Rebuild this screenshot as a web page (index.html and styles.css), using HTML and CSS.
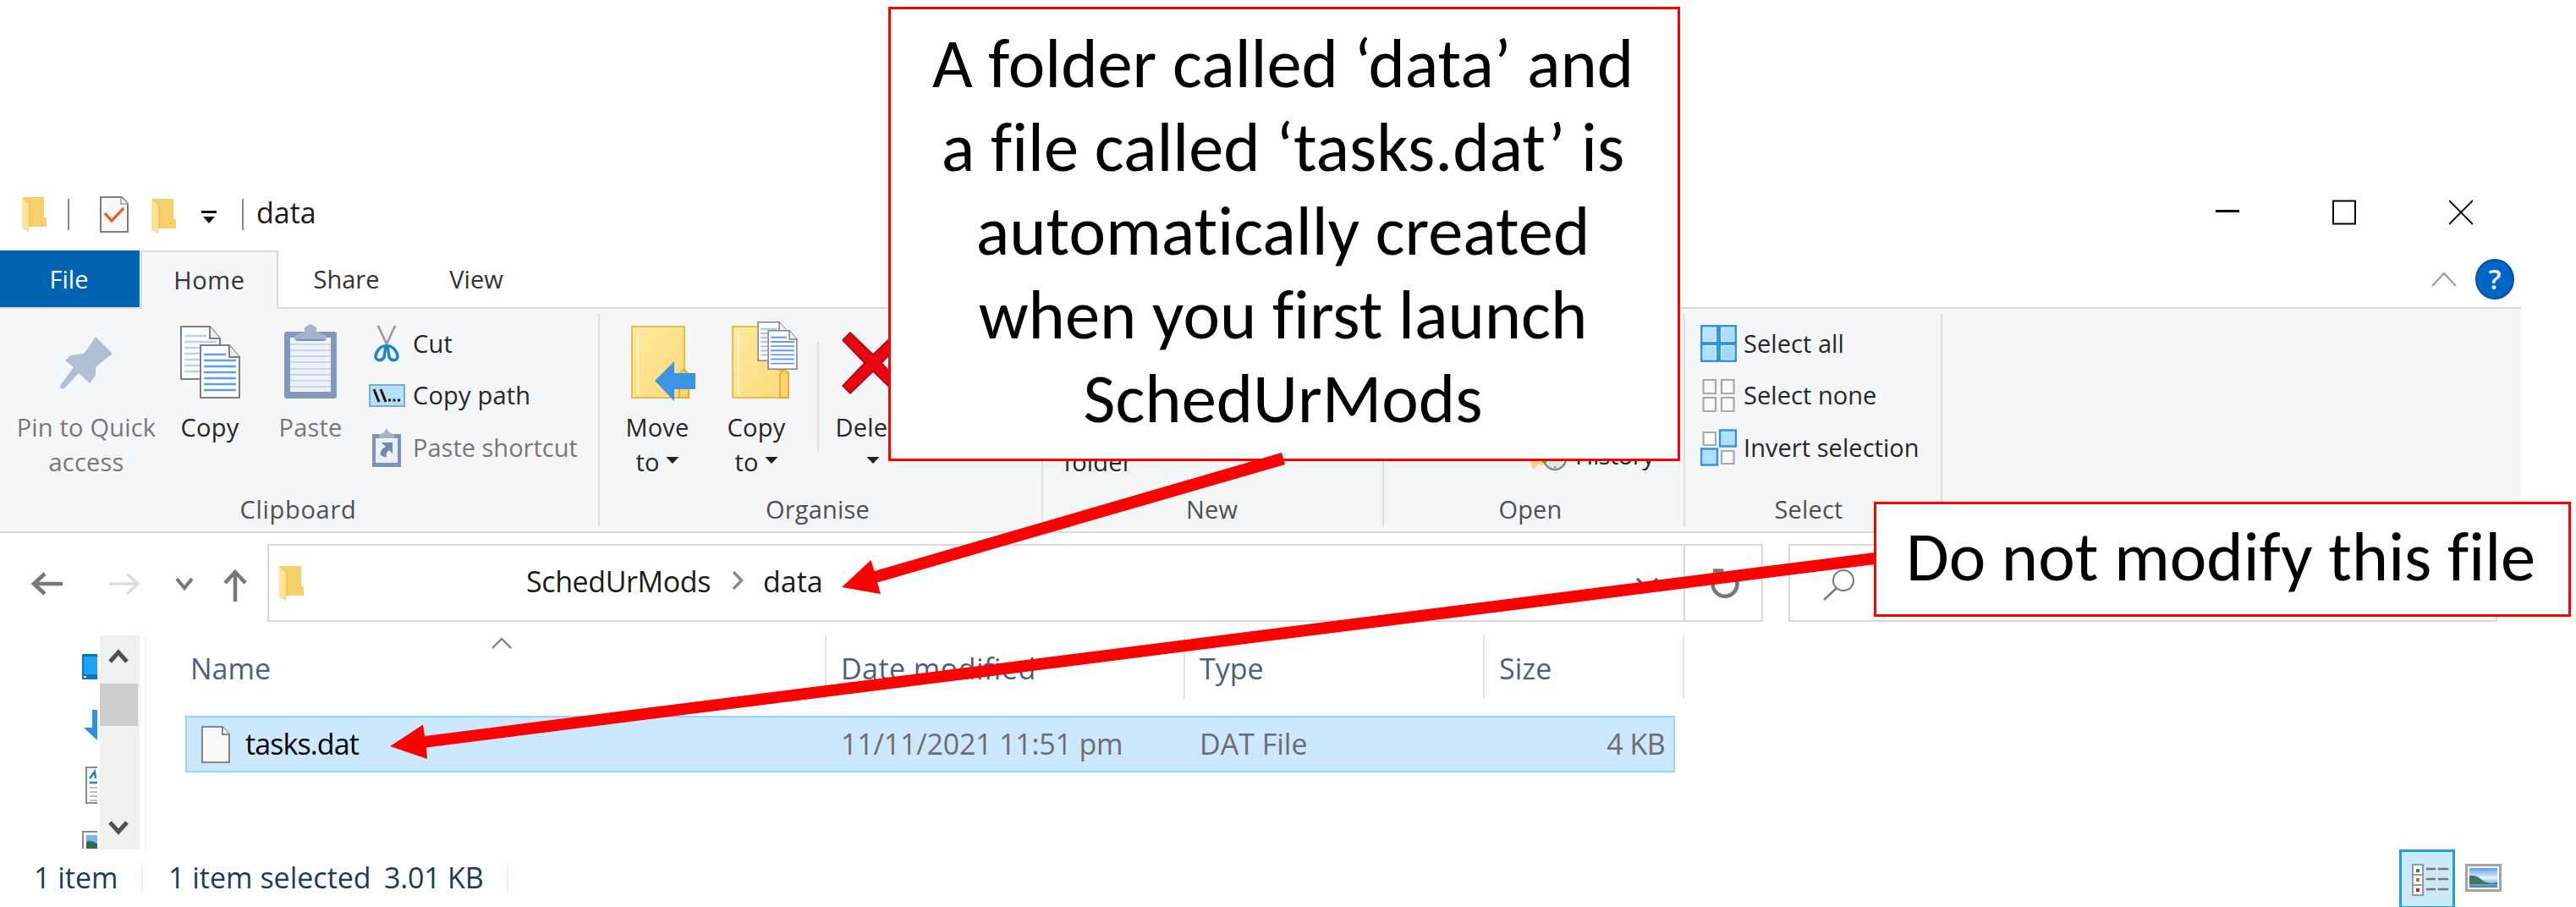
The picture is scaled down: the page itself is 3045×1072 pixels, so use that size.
FILE: index.html
```html
<!DOCTYPE html>
<html lang="en">
<head>
<meta charset="utf-8">
<title>data</title>
<link rel="stylesheet" href="styles.css">
</head>
<body>
<svg class="defs" width="0" height="0">
  <defs>
    <linearGradient id="gold" x1="0" y1="0" x2="1" y2="1"><stop offset="0" stop-color="#ffeaa0"/><stop offset="1" stop-color="#fbd876"/></linearGradient>
    <linearGradient id="sky" x1="0" y1="0" x2="0" y2="1"><stop offset="0" stop-color="#5b9bff"/><stop offset=".5" stop-color="#e8f4ff"/><stop offset="1" stop-color="#3f7fb8"/></linearGradient>
    <linearGradient id="tile" x1="0" y1="0" x2="1" y2="1"><stop offset="0" stop-color="#c4e6ff"/><stop offset="1" stop-color="#9dd3fb"/></linearGradient>
    <symbol id="folder" viewBox="0 0 29 42">
      <path d="M1 1H26V24L29 26V36H8V42L0 37Z" fill="#f5cf69"/>
      <path d="M8 9V36L6 41L0 38V1Z" fill="#ffe394"/>
      <path d="M1 1L9 9V36" fill="none" stroke="#e9bf58" stroke-width="1"/>
    </symbol>
    <symbol id="sheet" viewBox="0 0 48 64">
      <path d="M1 1H35L47 15V63H1Z" fill="#fff" stroke="#808080" stroke-width="2"/>
      <path d="M35 1V15H47" fill="#eee" stroke="#808080" stroke-width="2"/>
      <path d="M5 12H31M5 19H43M5 26H43M5 33H43M5 40H43M5 47H43M5 54H43" stroke="currentColor" stroke-width="2.6"/>
    </symbol>
  </defs>
</svg>

<div class="window">
  <header class="titlebar">
    <svg class="folder f-app"><use href="#folder"/></svg>
    <i class="bar"></i>
    <svg class="check" viewBox="0 0 34 43"><path d="M1 1H26L33 9V42H1Z" fill="#f8f8f8" stroke="#7c7c7c" stroke-width="2"/><path d="M25 1V9H33" fill="#fff" stroke="#9a9a9a" stroke-width="1.6"/><path d="M6 20L14 29L28 14" fill="none" stroke="#f4510b" stroke-width="3"/></svg>
    <svg class="folder f-new"><use href="#folder"/></svg>
    <svg class="qat" viewBox="0 0 18 15"><path d="M0 0H18V3H0ZM2 7H16L9 15Z" fill="#111"/></svg>
    <i class="bar bar2"></i>
    <span class="title">data</span>
    <div class="controls">
      <svg viewBox="0 0 28 30"><path d="M0 13.5H28" stroke="#000" stroke-width="3"/></svg>
      <svg viewBox="0 0 28 30"><path d="M1 1.5H27V28.5H1Z" fill="none" stroke="#000" stroke-width="2"/></svg>
      <svg viewBox="0 0 28 30"><path d="M0 1L28 29M28 1L0 29" stroke="#000" stroke-width="1.8"/></svg>
    </div>
  </header>

  <nav class="tabs">
    <span class="tab file">File</span><span class="tab home">Home</span><span class="tab share">Share</span><span class="tab view">View</span>
    <div class="help">
      <svg class="collapse" viewBox="0 0 30 18"><path d="M1 17L15 2L29 17" fill="none" stroke="#a0a0a0" stroke-width="2.4"/></svg>
      <span class="q">?</span>
    </div>
  </nav>

  <section class="ribbon">
    <div class="group g-clip">
      <div class="tools">
        <div class="big pin off">
          <svg viewBox="0 0 62 62" width="62" height="62"><path d="M42 0L62 20L53 27L42 36V46L35 55L22 43L5 61Q0 63 0 58L16 36L6 28L12 22L28 20L34 12Z" fill="#afbfd6"/></svg>
          <span>Pin to Quick<br>access</span>
        </div>
        <div class="big copy">
          <svg viewBox="0 0 71 86" width="71" height="86"><use href="#sheet" width="48" height="64" color="#b5d1fb"/><use href="#sheet" x="23" y="22" width="48" height="64" color="#5f9cf6"/></svg>
          <span>Copy</span>
        </div>
        <div class="big paste off">
          <svg viewBox="0 0 62 88" width="62" height="88"><rect y="9" width="62" height="79" rx="3" fill="#8497b8"/><path d="M7 16H55V80H7Z" fill="#ebf2fc"/><path d="M7 24H55M7 31H55M7 38H55M7 45H55M7 53H55M7 60H55M7 67H55M7 74H55" stroke="#cbd5e6" stroke-width="2"/><path d="M12 19V14L24 9V4L31 0L38 4V9L50 14V19Z" fill="#a3b3cd"/><path d="M14 19H48" stroke="#8194b5" stroke-width="2"/></svg>
          <span>Paste</span>
        </div>
        <div class="list">
          <div class="row"><span class="ic"><svg viewBox="0 0 30 44" width="30" height="44"><path d="M5 1L17 27M25 1L13 27" stroke="#999" stroke-width="2.6"/><path d="M14 25C8 24 2 32 2 38C3 43 10 43 12 38ZM16 25C22 24 28 32 28 38C27 43 20 43 18 38Z" fill="none" stroke="#1787cd" stroke-width="3.4"/></svg></span>Cut</div>
          <div class="row"><span class="ic"><svg viewBox="0 0 43 27" width="43" height="27"><path d="M1 1H42V26H1Z" fill="#b5e0fc" stroke="#78aed3" stroke-width="2"/><path d="M6 6L12 21M14 6L20 21" stroke="#111" stroke-width="3"/><path d="M23 19H26M28.500 19H31.500M34 19H37" stroke="#111" stroke-width="3"/></svg></span>Copy path</div>
          <div class="row off tight"><span class="ic"><svg viewBox="0 0 34 46" width="34" height="46"><path d="M0 7H34V46H0Z" fill="#7f93b5"/><path d="M4 12H30V41H4Z" fill="#eaf1fb"/><path d="M8 12V8L14 5L17 0L20 5L26 8V12Z" fill="#a3b3cd"/><path d="M11 17H24V30L20 26C16 29 16 32 17 35L10 32C9 27 12 24 16 22Z" fill="#7387ab"/></svg></span>Paste shortcut</div>
        </div>
      </div>
      <div class="caption">Clipboard</div>
    </div>

    <div class="group g-org">
      <div class="tools">
        <div class="big move">
          <svg viewBox="0 0 76 89" width="76" height="89"><path d="M1 1H63V52L68 57V85H1Z" fill="url(#gold)" stroke="#e6bd4c" stroke-width="2"/><path d="M57 85V57L62 52L68 57V85Z" fill="#fcd66b" stroke="#dfb039" stroke-width="2"/><path d="M8 6V80" stroke="#fff3c8" stroke-width="2"/><path d="M28 65L51 42V56H76V75H51V89Z" fill="#3a96e4"/></svg>
          <span>Move<br>to <i class="dd"></i></span>
        </div>
        <div class="big copyto">
          <svg viewBox="0 0 78 91" width="78" height="91"><path d="M1 6H55V57L67 60V90H1Z" fill="url(#gold)" stroke="#e6bd4c" stroke-width="2"/><path d="M57 90V62L62 57L67 62V90Z" fill="#fcd66b" stroke="#dfb039" stroke-width="2"/><path d="M8 11V85" stroke="#fff3c8" stroke-width="2"/><use href="#sheet" x="30" y="0" width="36" height="47" color="#9cc4fa"/><use href="#sheet" x="42" y="10" width="36" height="47" color="#5f9cf6"/></svg>
          <span>Copy<br>to <i class="dd"></i></span>
        </div>
        <div class="big del">
          <svg viewBox="0 0 74 74" width="74" height="74"><path d="M10 1L37 27L64 1L73 10L47 37L73 64L64 73L37 47L10 73L1 64L27 37L1 10Z" fill="#e80512" stroke="#a8000c" stroke-width="1.500"/></svg>
          <span>Delete<br><i class="dd"></i></span>
        </div>
      </div>
      <div class="caption">Organise</div>
    </div>

    <div class="group g-new">
      <div class="tools"><div class="big fold"><span>folder</span></div></div>
      <div class="caption">New</div>
    </div>

    <div class="group g-open">
      <div class="tools">
        <div class="hist"><svg viewBox="0 0 42 42" width="42" height="42"><path d="M0 0H14V36L8 34L3 40L0 36Z" fill="#fbd57a"/><circle cx="28" cy="27" r="13" fill="#e3e8eb" stroke="#8a8a8a" stroke-width="2.500"/><path d="M28 18V27L34 29M28 36V38M20 27H18M38 27H36" stroke="#777" stroke-width="2" fill="none"/><path d="M8 26L18 16L22 26L16 34Z" fill="#2fc23a"/></svg>History</div>
      </div>
      <div class="caption">Open</div>
    </div>

    <div class="group g-sel">
      <div class="tools">
        <div class="list tight">
          <div class="row"><span class="ic"><svg viewBox="0 0 43 44" width="43" height="44"><path d="M0 0H43V44H0Z" fill="#2f96e6"/><path d="M3 3H18.500V19.500H3ZM24.500 3H40V19.500H24.500ZM3 24.500H18.500V41H3ZM24.500 24.500H40V41H24.500Z" fill="url(#tile)" stroke="#d9f0ff" stroke-width="1"/></svg></span>Select all</div>
          <div class="row"><span class="ic"><svg viewBox="0 0 43 44" width="43" height="44"><path d="M3.500 4H18V20H3.500ZM25 4H39.500V20H25ZM3.500 25H18V41H3.500ZM25 25H39.500V41H25Z" fill="#fafafa" stroke="#a9a9a9" stroke-width="2.200"/></svg></span>Select none</div>
          <div class="row"><span class="ic"><svg viewBox="0 0 43 44" width="43" height="44"><path d="M3.500 4H18V19H3.500ZM25 26H39.500V41H25Z" fill="#fafafa" stroke="#a9a9a9" stroke-width="2.200"/><path d="M23 1.500H42V20.500H23ZM1 23.500H20V42.500H1Z" fill="#b4defe" stroke="#2f96e6" stroke-width="2.400"/></svg></span>Invert selection</div>
        </div>
      </div>
      <div class="caption">Select</div>
    </div>
  </section>

  <section class="address">
    <svg class="arrows" viewBox="0 0 316 94" width="316" height="94"><g fill="none" stroke="#777" stroke-width="4.500"><path d="M40 47H74M53 35L40 47L53 59"/><path d="M129 47H163M150 35L163 47L150 59" stroke="#dcdcdc" stroke-width="3.600"/><path d="M209 41L218 52L227 41" stroke-width="4"/><path d="M278 68V33M266 46L278 33L290 46"/></g></svg>
    <div class="path">
      <svg class="folder"><use href="#folder"/></svg>
      <span class="sched">SchedUrMods</span>
      <svg class="sep" viewBox="0 0 14 22" width="14" height="22"><path d="M2 1L11.500 11L2 21" fill="none" stroke="#8a8a8a" stroke-width="3.500"/></svg>
      <span>data</span>
      <svg class="drop" viewBox="0 0 28 16" width="28" height="16"><path d="M2 2L14 13L26 2" fill="none" stroke="#666" stroke-width="3.500"/></svg>
    </div>
    <div class="refresh"><svg viewBox="0 0 34 36" width="34" height="36"><path d="M6 9A14.500 15 0 1 0 28 9" fill="none" stroke="#777" stroke-width="4.500"/><path d="M3 3.500H13V14" fill="none" stroke="#777" stroke-width="4.500"/></svg></div>
    <div class="search"><svg viewBox="0 0 38 38" width="38" height="38"><circle cx="24" cy="14" r="12" fill="none" stroke="#777" stroke-width="2"/><path d="M16 23L1 37" stroke="#777" stroke-width="2.400"/></svg></div>
  </section>

  <section class="content">
    <svg class="tree" viewBox="0 0 18 252" width="18" height="252">
      <path d="M0 22H20V52H0Z" fill="#0f74bf"/><path d="M2 25H20V46H2Z" fill="#1aa4fc"/><path d="M2 48H5V50H2Z" fill="#fff"/>
      <path d="M12 88H20V126L2 109H12Z" fill="#2f8fe0"/>
      <path d="M5 156H20V198H5Z" fill="#fff" stroke="#8c8c8c" stroke-width="2"/><path d="M9 169L15 161L16 169" fill="none" stroke="#1787cd" stroke-width="2.500"/><path d="M9 174H20" stroke="#1787cd" stroke-width="2.500"/><path d="M9 180H20M9 185H20M9 190H20M9 195H20" stroke="#aaa" stroke-width="1.600"/>
      <path d="M1 256V232H20" fill="#fff" stroke="#8c8c8c" stroke-width="2"/><path d="M5 236H20V256H5Z" fill="#7fb1f7"/><path d="M5 244Q12 241 20 248V256H5Z" fill="#2f6b4c"/>
    </svg>
    <div class="scroll">
      <svg viewBox="0 0 24 18" width="24" height="18"><path d="M2 15L12 4L22 15" fill="none" stroke="#505050" stroke-width="5"/></svg>
      <i class="thumb"></i>
      <svg class="dn" viewBox="0 0 24 18" width="24" height="18"><path d="M2 3L12 14L22 3" fill="none" stroke="#505050" stroke-width="5"/></svg>
    </div>
    <div class="files">
      <div class="cols head">
        <span class="name">Name<svg class="sort" viewBox="0 0 24 14" width="24" height="14"><path d="M1 13L12 2L23 13" fill="none" stroke="#777" stroke-width="2"/></svg></span>
        <span class="date wide">Date modified</span><span class="type">Type</span><span class="size">Size</span>
      </div>
      <div class="cols item">
        <span class="name"><svg viewBox="0 0 34 44" width="34" height="44"><path d="M1 1H25L33 10V43H1Z" fill="#fafafa" stroke="#858585" stroke-width="2"/><path d="M25 1V10H33" fill="#fff" stroke="#858585" stroke-width="2"/></svg>tasks.dat</span>
        <span class="date">11/11/2021 11:51 pm</span><span class="type">DAT File</span><span class="size">4 KB</span>
      </div>
    </div>
  </section>

  <footer class="status">
    <span class="count">1 item</span>
    <span class="picked">1 item selected</span>
    <span class="kb">3.01 KB</span>
    <div class="views">
      <span class="details"><svg viewBox="0 0 44 38" width="44" height="38"><path d="M1 1H13V37H1ZM1 13H13M1 25H13" fill="#fff" stroke="#9a9a9a" stroke-width="2.200"/><path d="M5 6H9V10H5Z" fill="#2d7f9e"/><path d="M5 17H9V21H5Z" fill="#84912d"/><path d="M5 29H9V33H5Z" fill="#c8251b"/><path d="M17 6H28M31 6H43M17 18H28M31 18H43M17 30H28M31 30H43" stroke="#777" stroke-width="2.600"/></svg></span>
      <svg viewBox="0 0 43 33" width="43" height="33"><path d="M1.500 1.500H41.500V31.500H1.500Z" fill="#fff" stroke="#a3a5a3" stroke-width="3"/><path d="M5 5H38V28H5Z" fill="url(#sky)"/><path d="M5 14Q13 13 20 19T38 22V24H5Z" fill="#3f7a5c"/></svg>
    </div>
  </footer>
</div>

<div class="callout second">Do not modify this file</div>
<div class="callout first">A folder called ‘data’ and<br>a file called ‘tasks.dat’ is<br>automatically created<br>when you first launch<br>SchedUrMods</div>
<svg class="pointers" viewBox="0 0 3045 1072" width="3045" height="1072">
  <path d="M995 694L1029.500 662L1033.500 675L1515 535L1519 549L1037 688.500L1041 702Z" fill="#f00"/>
  <path d="M461 882L500 856.500L502 870L2216 653V667L504 883.500L505 897Z" fill="#f00"/>
</svg>
</body>
</html>
```
FILE: styles.css
```css
* { box-sizing: border-box; }
body {
  margin: 0;
  width: 3045px;
  height: 1072px;
  position: relative;
  overflow: hidden;
  background: #fff;
  font-family: "Open Sans", "Noto Sans", sans-serif;
  font-size: 34px;
  color: #1a1a1a;
}
svg { display: block; flex: none; }
.defs { position: absolute; }
.window {
  display: flex;
  flex-direction: column;
  padding-top: 210px;
  height: 1072px;
}
.folder { width: 29px; height: 42px; }

/* title bar */
.titlebar { display: flex; align-items: center; height: 86px; padding-left: 26px; flex: none; }
.bar { width: 2px; height: 37px; background: #8a8a8a; margin-left: 25px; }
.check { width: 34px; height: 43px; margin-left: 36px; }
.f-new { margin: 4px 0 0 27px; }
.qat { width: 18px; height: 15px; margin: 6px 0 0 30px; }
.bar2 { margin-left: 30px; }
.title { margin: -4px 0 0 15px; }
.controls { display: flex; gap: 110px; margin: -4px 122px 0 auto; }
.controls svg { width: 28px; height: 30px; }

/* tabs */
.tabs { display: flex; height: 67px; flex: none; font-size: 29px; color: #333; }
.tab { line-height: 68px; text-align: center; margin-right: 1px; }
.file { width: 165px; background: #0063b1; color: #fff; padding-right: 2px; }
.home {
  width: 163px;
  height: 69px;
  background: #f5f6f8;
  border: 2px solid #dadbdc;
  border-bottom: 0;
  line-height: 65px;
  letter-spacing: .6px;
  position: relative;
}
.share { width: 159px; }
.view { width: 146px; }
.help { display: flex; align-items: center; gap: 22px; margin-left: auto; padding-right: 73px; }
.collapse { width: 30px; height: 18px; }
.q {
  width: 46px;
  height: 48px;
  border-radius: 50%;
  background: #0067c8;
  border: 2px solid #0d4f94;
  color: #fff;
  font-size: 33px;
  font-weight: 600;
  line-height: 44px;
  text-align: center;
}

/* ribbon */
.ribbon {
  display: flex;
  width: 2980px;
  height: 267px;
  flex: none;
  background: #f5f6f8;
  border: solid #dadbdc;
  border-width: 2px 0;
  font-size: 29px;
  color: #262626;
  letter-spacing: .2px;
}
.group {
  display: flex;
  flex-direction: column;
  height: 253px;
  margin-top: 5px;
  border-right: 2px solid #dfe0e2;
}
.g-clip { width: 709px; }
.g-org { width: 524px; }
.g-new { width: 403px; }
.g-open { width: 356px; }
.g-sel { width: 304px; }
.tools { display: flex; height: 211px; }
.caption { text-align: center; line-height: 42px; height: 42px; margin-top: 4px; color: #505050; }
.g-clip .caption { letter-spacing: .7px; padding-right: 2px; }
.g-org .caption { padding-right: 7px; }
.g-new .caption { padding-right: 2px; }
.g-open .caption { padding-right: 8px; }
.g-sel .caption { padding-right: 10px; }
.off { color: #777; }
.big { display: flex; flex-direction: column; align-items: center; justify-content: flex-end; text-align: center; height: 196px; }
.big span { line-height: 41px; height: 82px; white-space: nowrap; margin-top: 13px; }
.pin { margin-left: 19px; width: 166px; }
.pin span { margin-top: 24px; }
.copy { width: 80px; margin-left: 23px; }
.paste { width: 80px; margin-left: 39px; }
.dd {
  display: inline-block;
  width: 15px;
  height: 8px;
  background: #222;
  clip-path: polygon(0 0, 100% 0, 50% 100%);
  vertical-align: 9px;
}
.list { display: flex; flex-direction: column; margin: 5px 0 0 25px; }
.g-sel .list { margin: 5px 0 0 14px; }
.row { display: flex; align-items: center; height: 61.500px; line-height: 48px; white-space: nowrap; }
.row.tight { letter-spacing: 0; }
.list.tight { letter-spacing: .05px; }
.ic { width: 50px; margin-right: 6px; display: flex; justify-content: center; }
.g-sel .ic { margin-right: 5px; }
.move { width: 80px; margin-left: 28px; }
.move svg { margin-left: 14px; }
.move span { margin-top: 10px; }
.copyto { position: relative; width: 80px; margin-left: 37px; }
.copyto svg { margin-left: 20px; }
.copyto::after { content: ""; position: absolute; left: 112px; top: 34px; width: 2px; height: 130px; background: #dfe0e2; }
.del { width: 90px; margin-left: 53px; }
.del span { margin-top: 18px; }
.fold { margin-left: 25px; width: 80px; }
.fold span { height: 41px; }
.hist { display: flex; gap: 10px; margin: 145px 0 0 174px; height: 46px; line-height: 46px; letter-spacing: -.5px; }

/* address bar */
.address { display: flex; height: 121px; flex: none; padding-top: 13px; color: #1a1a1a; }
.path { display: flex; align-items: center; width: 1676px; height: 92px; border: 2px solid #d9d9d9; padding-left: 12px; }
.path > span { margin-top: -4px; }
.sched { margin-left: 263px; letter-spacing: -.4px; }
.sep { margin: -6px 23px 0 25px; }
.drop { margin: 2px 29px 0 auto; }
.refresh { width: 92px; height: 92px; border: 2px solid #d9d9d9; border-left: 0; display: flex; align-items: center; justify-content: center; padding-left: 4px; }
.search { width: 838px; height: 92px; margin-left: 30px; border: 2px solid #d9d9d9; padding: 27px 0 0 39px; }

/* file list */
.content { display: flex; height: 253px; flex: none; padding-left: 97px; }
.scroll { width: 47px; height: 253px; background: #f0f0f0; margin-left: 3px; display: flex; flex-direction: column; padding: 16px 0 0 10px; }
.thumb { width: 45px; height: 50px; background: #cdcdcd; margin: 23px 0 0 -10px; }
.dn { margin-top: 111px; }
.files { border-left: 2px solid #f3f3f3; margin-left: 6px; padding-left: 46px; }
.cols { display: flex; }
.head { height: 75px; color: #4c607a; line-height: 78px; }
.head > span { border-right: 2px solid #e3e3e3; }
.name { width: 758px; display: flex; }
.date { width: 424px; padding-left: 17px; }
.type { width: 354px; padding-left: 17px; }
.size { width: 236px; padding-left: 17px; }
.head .name { padding-left: 6px; }
.head .wide { letter-spacing: .45px; }
.sort { margin: 2px 0 0 261px; }
.item { width: 1761px; height: 67px; margin-top: 20px; background: #cce8ff; border: 2px solid #99d1ff; line-height: 63px; color: #6d6d6d; }
.item .name { width: 756px; padding-left: 17px; gap: 18px; color: #000; letter-spacing: -.9px; align-items: center; }
.item .date { letter-spacing: -.2px; }
.item .size { width: 223px; text-align: right; padding-right: 10px; letter-spacing: -.6px; }

/* status bar */
.status { display: flex; height: 68px; flex: none; padding-left: 40px; line-height: 67px; color: #1e395b; white-space: nowrap; }
.count, .kb { background: linear-gradient(#eee, #eee) right 18px / 2px 32px no-repeat; }
.count { width: 129px; margin-right: 30px; }
.picked { width: 255px; }
.kb { width: 147px; letter-spacing: -.2px; }
.views { display: flex; margin-left: auto; gap: 12px; align-items: flex-start; padding-right: 88px; }
.details { width: 66px; height: 70px; background: #cbe8f6; border: 3px solid #26a0da; padding: 14px 0 0 12px; }
.views > svg { margin-top: 17px; }

/* annotations lying over the window */
.callout {
  position: absolute;
  background: #fff;
  border: 3px solid #f00;
  color: #000;
  font: 82.500px/99px Carlito, Calibri, Lato, sans-serif;
  font-variant-ligatures: none;
  text-align: center;
  white-space: nowrap;
}
.first { left: 1050px; top: 8px; width: 936px; height: 537px; padding: 14px 3px 0 0; }
.second { left: 2215px; top: 593px; width: 824px; height: 136px; padding: 12px 4px 0 0; }
.pointers { position: absolute; left: 0; top: 0; }
```
